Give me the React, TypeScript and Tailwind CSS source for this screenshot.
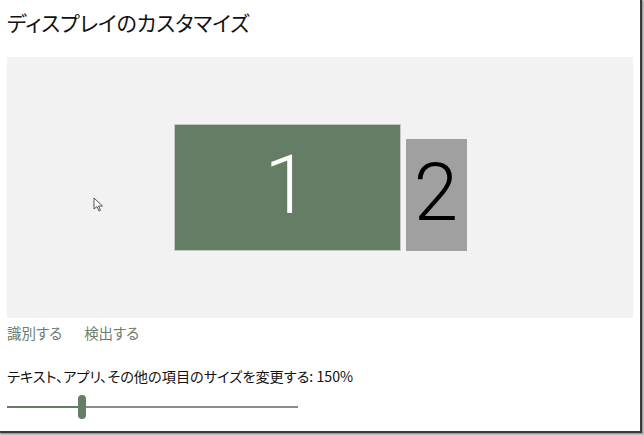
import React from 'react';

const jp = { fontFamily: '"Noto Sans CJK JP", "Noto Sans", sans-serif' };
const digit = { fontFamily: 'Roboto, "Open Sans", sans-serif' };

const App: React.FC = () => {
  return (
    <div className="w-[644px] h-[435px] bg-[#c8c8c8] overflow-hidden" style={jp}>
      <div className="w-[642px] h-[433px] bg-white border-r-2 border-b-2 border-[#3a3a3a] shadow-[1px_1px_1px_#9a9a9a]">
        <div className="pl-[7px] pr-[7px] [font-feature-settings:'palt']">
          <h1 className="pt-[7px] text-[21px] leading-[30px] text-[#111]">ディスプレイのカスタマイズ</h1>

          <div className="mt-[20px] w-[626px] h-[261px] bg-[#f2f2f2] relative flex items-center justify-center">
            <div className="flex items-end gap-[5px]">
              <div className="w-[227px] h-[127px] bg-[#647d64] border border-white/60 flex items-center justify-center">
                <span className="text-white text-[82px] leading-none font-light -mt-[6px]" style={digit}>1</span>
              </div>
              <div className="w-[61px] h-[112px] bg-[#a0a0a0] flex items-center justify-center">
                <span className="text-black text-[80px] leading-none font-light -mt-[4px]" style={digit}>2</span>
              </div>
            </div>
            {/* mouse pointer */}
            <svg className="absolute left-[86px] top-[140px]" width="12" height="16" viewBox="0 0 12 16">
              <path d="M1 1 L1 12 L4 9.5 L6 14 L7.5 13.3 L5.6 9 L9.5 9 Z" fill="#fff" stroke="#555" strokeWidth="1" strokeLinejoin="round" />
            </svg>
          </div>

          <div className="flex gap-[22px] mt-[5px] text-[14.5px] leading-[20px] text-[#6f7d6f]">
            <span>識別する</span>
            <span>検出する</span>
          </div>

          <p className="mt-[23px] text-[14.2px] leading-[20px] text-[#111]">テキスト、アプリ、その他の項目のサイズを変更する: 150%</p>

          <div className="relative mt-[9px] w-[291px] h-[24px] flex items-center">
            <div className="w-[74px] h-[2px] bg-[#647d64]" />
            <div className="flex-1 h-[2px] bg-[#8c8c8c]" />
            <div className="absolute left-[71px] top-0 w-[8px] h-[24px] rounded-full bg-[#647d64]" />
          </div>
        </div>
      </div>
    </div>
  );
};

export default App;
